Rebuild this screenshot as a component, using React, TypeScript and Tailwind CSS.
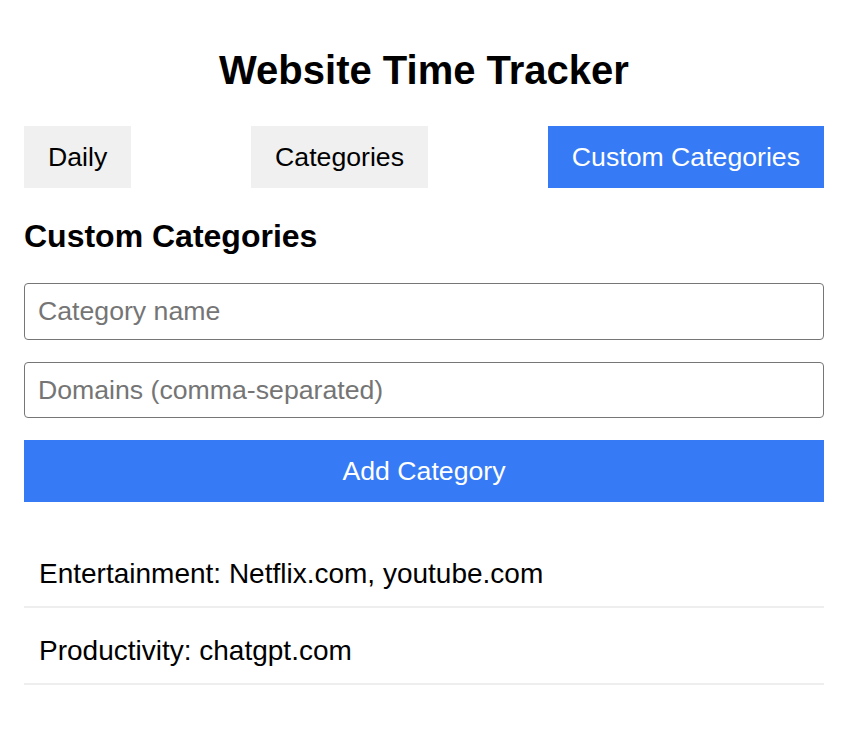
import { useState } from "react";

const TABS = ["Daily", "Categories", "Custom Categories"];

const CATEGORIES = [
  { name: "Entertainment", domains: ["Netflix.com", "youtube.com"] },
  { name: "Productivity", domains: ["chatgpt.com"] },
];

export default function App() {
  const [active, setActive] = useState("Custom Categories");

  return (
    <div
      className="min-h-screen bg-white text-black pl-[24px]"
      style={{ fontFamily: '"Liberation Sans", Arial, sans-serif' }}
    >
      <div className="w-[800px]">
        <h1 className="pt-[47px] text-center text-[40px] leading-[46px] font-bold">
          Website Time Tracker
        </h1>

        {/* Tabs */}
        <div className="mt-[33px] flex justify-between">
          {TABS.map((tab) => (
            <button
              key={tab}
              onClick={() => setActive(tab)}
              className={`px-[24px] py-[16px] text-[26.67px] leading-[30px] ${
                active === tab ? "bg-[#367af6] text-white" : "bg-[#f0f0f0] text-black"
              }`}
            >
              {tab}
            </button>
          ))}
        </div>

        {/* Custom categories form */}
        <h2 className="mt-[30px] text-[32px] leading-[37px] font-bold">Custom Categories</h2>

        <div className="mt-[28px] flex flex-col gap-[22px]">
          <input
            placeholder="Category name"
            className="w-full rounded-[4px] border border-[#767676] px-[13px] py-[12px] text-[26.67px] leading-[31px] placeholder:text-[#757575] outline-none"
          />
          <input
            placeholder="Domains (comma-separated)"
            className="w-full rounded-[4px] border border-[#767676] px-[13px] py-[12px] text-[26.67px] leading-[30px] placeholder:text-[#757575] outline-none"
          />
          <button className="w-full bg-[#367af6] py-[16px] text-[26.67px] leading-[30px] text-white">
            Add Category
          </button>
        </div>

        {/* List */}
        <ul className="mt-[29px]">
          {CATEGORIES.map(({ name, domains }) => (
            <li
              key={name}
              className="border-b-2 border-[#eeeeee] pl-[15px] pt-[27px] pb-[16px] text-[28px] leading-[32px]"
            >
              {name}: {domains.join(", ")}
            </li>
          ))}
        </ul>
      </div>
    </div>
  );
}
